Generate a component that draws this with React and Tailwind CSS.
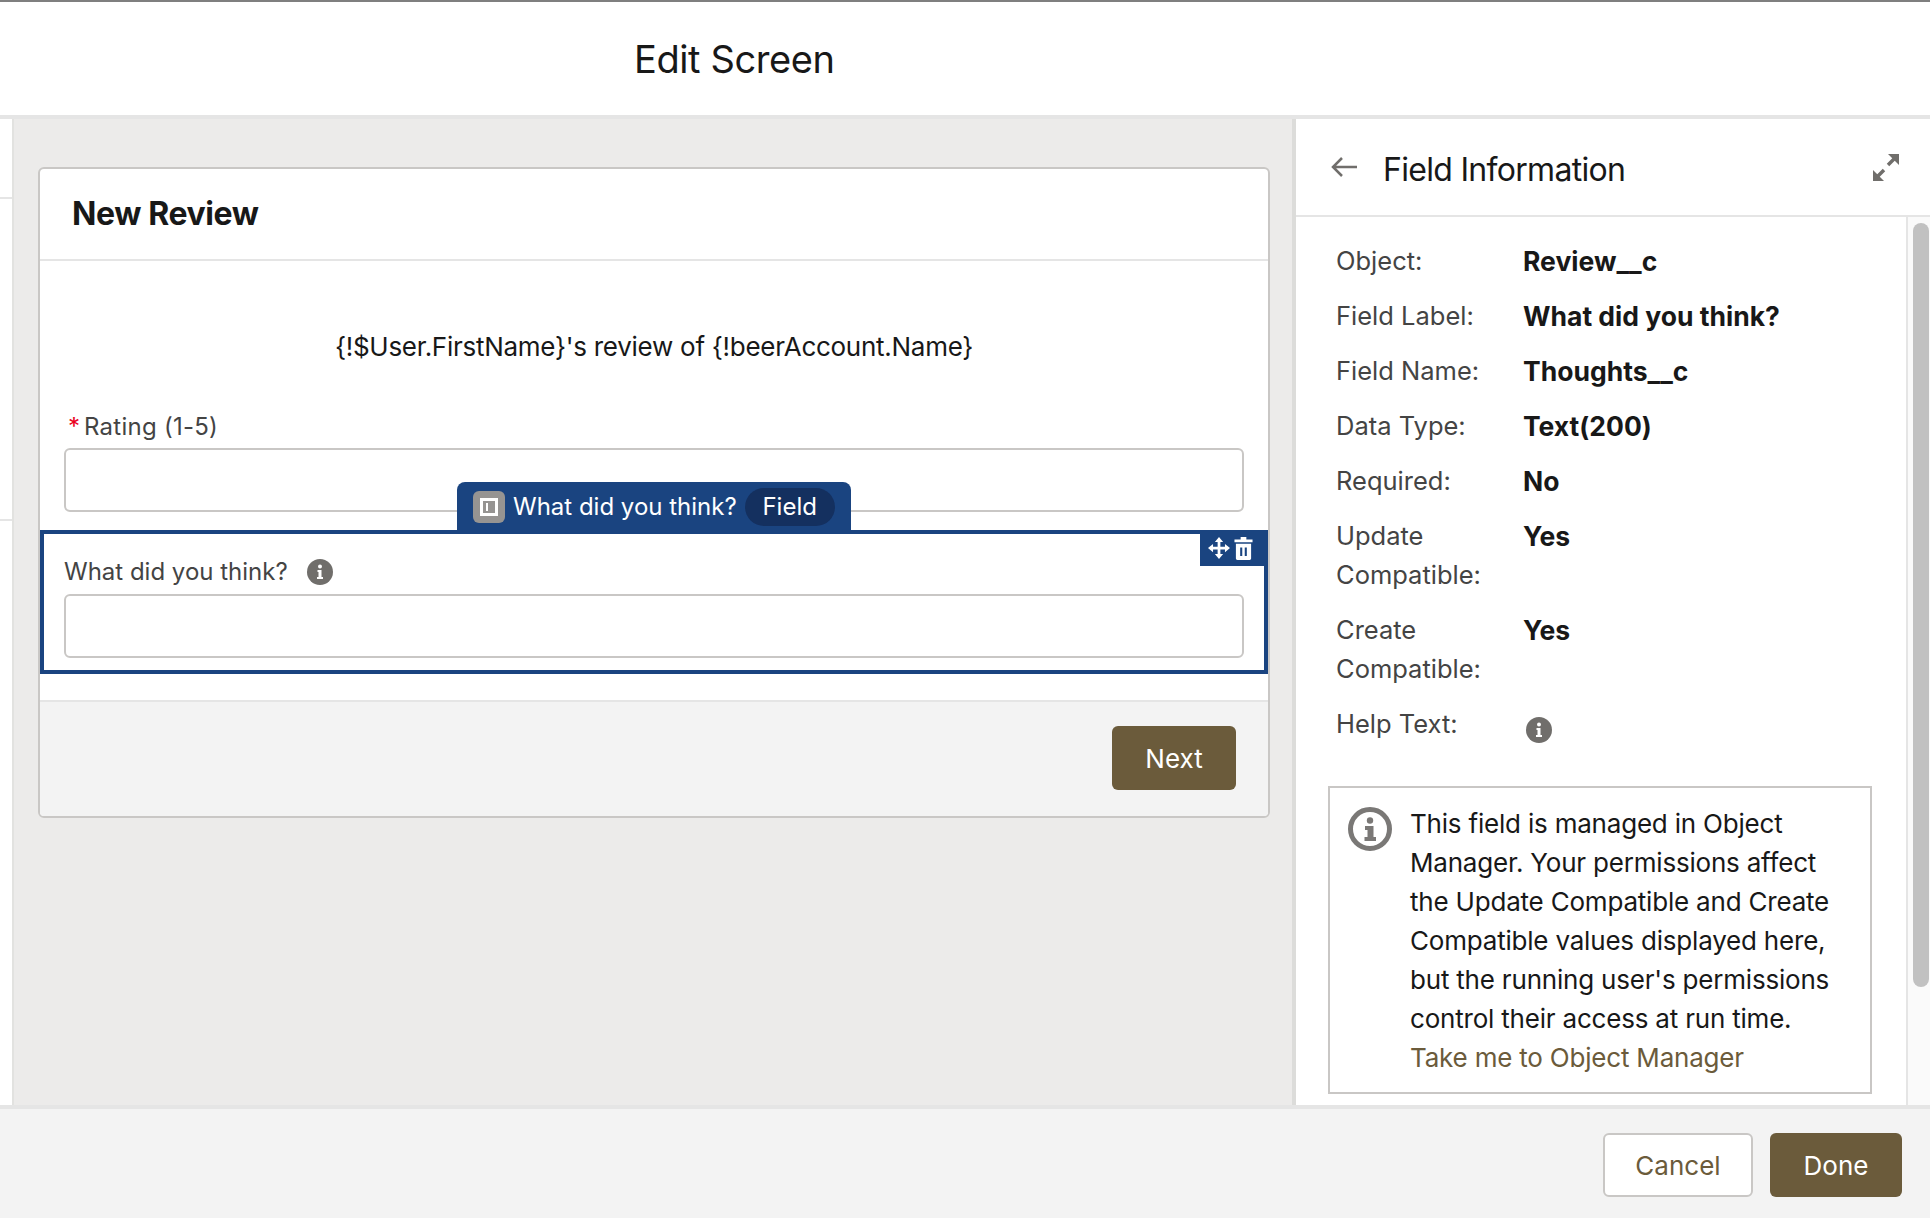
import React from 'react';

const InfoDot = ({ className }) => (
  <svg viewBox="0 0 26 26" className={className}>
    <circle cx="13" cy="13" r="13" fill="#706e6b" />
    <circle cx="13" cy="7.5" r="2" fill="#fff" />
    <path d="M10.5 11h4v7h1.500v2h-6v-2h1.500v-5h-1z" fill="#fff" />
  </svg>
);

const InfoRing = () => (
  <svg viewBox="0 0 44 44" className="w-[44px] h-[44px] shrink-0">
    <circle cx="22" cy="22" r="19.500" fill="none" stroke="#7a7876" strokeWidth="5" />
    <circle cx="22" cy="13.500" r="3.200" fill="#7a7876" />
    <path d="M17 19h8.500v11h2.500v4H16.500v-4h3v-7H17z" fill="#7a7876" />
  </svg>
);

const MoveIcon = () => (
  <svg viewBox="0 0 24 24" className="w-[22px] h-[24px]" fill="#fff">
    <path d="M12 0l4.500 5.500h-3v5h5v-3L24 12l-5.500 4.500v-3h-5v5h3L12 24l-4.500-5.500h3v-5h-5v3L0 12l5.500-4.500v3h5v-5h-3z" />
  </svg>
);

const TrashIcon = () => (
  <svg viewBox="0 0 20 24" className="w-[19px] h-[23px]" fill="#fff">
    <path d="M7 0h6v2.500h6.500v3H.5v-3H7z" />
    <path fillRule="evenodd" d="M2 7h16v15.500a1.500 1.500 0 0 1-1.500 1.500h-13A1.500 1.500 0 0 1 2 22.500zm4.500 4v9h2.200v-9zm4.800 0v9h2.200v-9z" />
  </svg>
);

const FieldIcon = () => (
  <div className="w-[32px] h-[32px] rounded-[6px] bg-[#969492] flex items-center justify-center shrink-0">
    <div className="w-[18px] h-[18px] border-[3px] border-white flex items-center pl-[3px]">
      <div className="w-[2px] h-[8px] bg-white" />
    </div>
  </div>
);

const BackArrow = () => (
  <svg viewBox="0 0 28 22" className="w-[28px] h-[22px] -ml-[1px]" fill="none" stroke="#706e6b" strokeWidth="2.500">
    <path d="M27 11H3M12 2l-9 9 9 9" />
  </svg>
);

const ExpandIcon = () => (
  <svg viewBox="0 0 28 28" className="w-[28px] h-[28px]">
    <path d="M16 1h11v11z" fill="#706e6b" />
    <path d="M12 28H1V17z" fill="#706e6b" />
    <path d="M22 6l-6 6M6 23l6-6" stroke="#706e6b" strokeWidth="3.500" fill="none" />
  </svg>
);

const rows = [
  { label: 'Object:', value: 'Review__c', h: 'h-[55px]' },
  { label: 'Field Label:', value: 'What did you think?', h: 'h-[55px]' },
  { label: 'Field Name:', value: 'Thoughts__c', h: 'h-[55px]' },
  { label: 'Data Type:', value: 'Text(200)', h: 'h-[55px]' },
  { label: 'Required:', value: 'No', h: 'h-[55px]' },
  { label: 'Update Compatible:', value: 'Yes', h: 'h-[94px]' },
  { label: 'Create Compatible:', value: 'Yes', h: 'h-[94px]' },
];

const TextBox = () => (
  <div className="h-[64px] bg-white border-2 border-[#c9c7c5] rounded-[6px]" />
);

export default function App() {
  return (
    <div className="w-[1930px] h-[1218px] overflow-hidden flex flex-col bg-white font-['Inter',sans-serif] text-[#181818]">
      <header className="h-[119px] shrink-0 border-t-2 border-t-[#7f7f7f] border-b-4 border-b-[#e5e5e5] flex items-center pl-[634px]">
        <h1 className="text-[38px] leading-none font-normal tracking-[-0.4px]">Edit Screen</h1>
      </header>

      <div className="flex-1 min-h-0 flex">
        <div className="w-[14px] shrink-0 bg-white border-r-2 border-r-[#e2e2e0] pt-[78px]">
          <div className="h-[2px] bg-[#e5e5e5]" />
          <div className="h-[2px] bg-[#e5e5e5] mt-[320px]" />
        </div>

        <main className="w-[1278px] shrink-0 bg-[#ecebea] pt-[48px] pl-[24px] pr-[22px]">
          <div className="bg-white border-2 border-[#c9c7c5] rounded-[6px] h-[651px] flex flex-col">
            <div className="h-[92px] shrink-0 border-b-2 border-b-[#e5e5e5] flex items-center pl-[32px]">
              <h2 className="text-[32px] leading-none font-bold tracking-[-0.4px]">New Review</h2>
            </div>

            <div className="flex-1 flex flex-col">
              <p className="text-center text-[26px] leading-[32px] mt-[70px] tracking-[-0.27px]">
                {"{!$User.FirstName}'s review of {!beerAccount.Name}"}
              </p>
              <div className="px-[24px] mt-[48px]">
                <div className="text-[24px] leading-[30px] text-[#444444] mt-[1px] mb-[6px] pl-[4px]">
                  <span className="text-[#ea001e] mr-[4px]">*</span><span className="tracking-[0.25px]">Rating (1-5)</span>
                </div>
                <TextBox />
              </div>

              <div className="relative mt-[18px] h-[144px] border-[4px] border-[#1a4480] pt-[23px] px-[20px]">
                <div className="absolute left-[413px] top-[-52px] w-[394px] h-[49px] bg-[#1a4480] rounded-t-[8px] flex items-center pl-[16px] gap-[8px] text-white">
                  <FieldIcon />
                  <span className="text-[24px] leading-none whitespace-nowrap">What did you think?</span>
                  <span className="h-[38px] w-[90px] rounded-full bg-[#14305f] flex items-center justify-center text-[24px] leading-none">Field</span>
                </div>
                <div className="absolute right-[-4px] top-[-4px] w-[68px] h-[36px] bg-[#1a4480] flex items-center pl-[8px] gap-[4px]">
                  <MoveIcon />
                  <TrashIcon />
                </div>
                <div className="flex items-center gap-[20px] h-[30px] mb-[7px] text-[24px] leading-[30px] text-[#444444]">
                  What did you think?
                  <InfoDot className="w-[26px] h-[26px] -ml-[1px]" />
                </div>
                <TextBox />
              </div>

              <div className="mt-[26px] flex-1 bg-[#f3f3f3] border-t-2 border-t-[#e5e5e5] rounded-b-[4px] flex items-center justify-end pr-[32px] pb-[3px]">
                <button className="w-[124px] h-[64px] pt-[2px] rounded-[6px] bg-[#6b5b3b] text-white text-[26px]">Next</button>
              </div>
            </div>
          </div>
        </main>

        <aside className="flex-1 min-w-0 bg-white border-l-4 border-l-[#dcdcda] flex flex-col">
          <div className="h-[98px] shrink-0 border-b-2 border-b-[#e5e5e5] flex items-center pl-[35px] pr-[30px]">
            <BackArrow />
            <h2 className="ml-[25px] mt-[6px] text-[32px] leading-none font-normal flex-1 tracking-[-0.7px]">Field Information</h2>
            <ExpandIcon />
          </div>
          <div className="flex-1 min-h-0 flex">
            <div className="flex-1 min-w-0 border-r-2 border-r-[#e5e5e5] pl-[31px] pr-[34px] pt-[25px]">
              {rows.map((row) => (
                <div key={row.label} className={`flex ${row.h}`}>
                  <div className="w-[196px] -mt-[1px] pl-[9px] pr-[20px] text-[25.5px] leading-[39px] text-[#444444]">{row.label}</div>
                  <div className="text-[26.5px] leading-[39px] font-bold">{row.value}</div>
                </div>
              ))}
              <div className="flex h-[81px]">
                <div className="w-[196px] -mt-[1px] pl-[9px] text-[25.5px] leading-[39px] text-[#444444]">Help Text:</div>
                <InfoDot className="w-[26px] h-[26px] mt-[12px] ml-[3px]" />
              </div>
              <div className="border-2 border-[#c9c7c5] h-[308px] flex pl-[18px] pt-[19px] gap-[18px] ml-[1px]">
                <InfoRing />
                <p className="text-[26px] leading-[39px] -mt-[3px] pr-[20px] tracking-[-0.2px]">
                  This field is managed in Object Manager. Your permissions affect the Update Compatible and Create Compatible values displayed here, but the running user's permissions control their access at run time.
                  <a className="block text-[#6b5b3b]">Take me to Object Manager</a>
                </p>
              </div>
            </div>
            <div className="w-[22px] shrink-0 bg-[#fafafa] pl-[5px] pt-[6px]">
              <div className="w-[16px] h-[764px] bg-[#c1c1c1] rounded-full" />
            </div>
          </div>
        </aside>
      </div>

      <footer className="h-[113px] shrink-0 bg-[#f3f3f3] border-t-4 border-t-[#e5e5e5] flex items-center justify-end gap-[17px] pr-[28px] pt-[3px]">
        <button className="w-[150px] h-[64px] rounded-[6px] bg-white border-2 border-[#c9c7c5] text-[#6b5b3b] text-[26px]">Cancel</button>
        <button className="w-[132px] h-[64px] rounded-[6px] bg-[#6b5b3b] text-white text-[26px]">Done</button>
      </footer>
    </div>
  );
}
